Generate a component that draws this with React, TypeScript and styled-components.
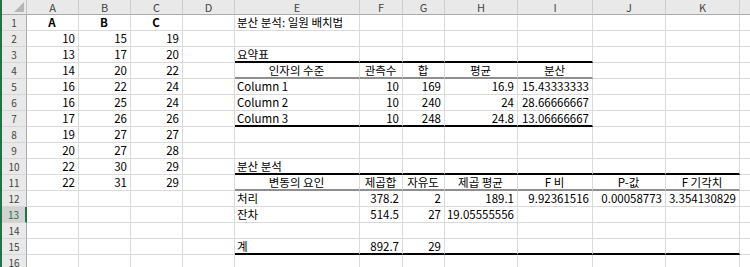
import React from "react";
import styled, { createGlobalStyle, css } from "styled-components";

const GlobalStyle = createGlobalStyle`
  html, body { margin: 0; padding: 0; background: #ffffff; }
  body {
    width: 750px;
    height: 267px;
    overflow: hidden;
    font-family: "Noto Sans CJK KR", "Noto Sans", sans-serif;
  }
`;

type Align = "l" | "r" | "c";
type Edge = "thick" | "thin" | undefined;

interface CellSpec {
  v?: string;
  a?: Align;
  b?: boolean;
  e?: Edge;
}

const COLS = ["A", "B", "C", "D", "E", "F", "G", "H", "I", "J", "K", ""];

const Sheet = styled.div`
  display: grid;
  grid-template-columns: 25px 52px 52px 52px 52px 125px 43px 42px 73px 75px 73px 74px 80px;
  grid-template-rows: 15px repeat(16, 16px);
  width: 750px;
  height: 267px;
  overflow: hidden;
  box-sizing: border-box;
  border-left: 2px solid #217346;
  background: #ffffff;
`;

const Corner = styled.div`
  display: flex;
  align-items: flex-end;
  justify-content: flex-end;
  padding: 0 2px 2px 0;
  box-sizing: border-box;
  background: #e9e9e9;
  border-right: 1px solid #c4c4c4;
  border-bottom: 1px solid #ababab;
`;

const Triangle = styled.div`
  width: 0;
  height: 0;
  border-left: 10px solid transparent;
  border-bottom: 10px solid #b6b6b6;
`;

const ColHeader = styled.div`
  display: flex;
  align-items: center;
  justify-content: center;
  box-sizing: border-box;
  background: #e9e9e9;
  border-right: 1px solid #cdcdcd;
  border-bottom: 1px solid #ababab;
  font-size: 11px;
  color: #444444;
  line-height: 14px;
`;

const RowHeader = styled.div<{ $active?: boolean }>`
  display: flex;
  align-items: center;
  justify-content: center;
  box-sizing: border-box;
  background: #e9e9e9;
  border-right: 1px solid #ababab;
  border-bottom: 1px solid #d6d6d6;
  font-size: 10px;
  color: #444444;
  line-height: 15px;
  ${(p) =>
    p.$active &&
    css`
      background: #d2d2d2;
      color: #217346;
      border-right: 2px solid #217346;
    `}
`;

const Cell = styled.div<{ $align: Align; $bold?: boolean; $edge?: Edge }>`
  display: flex;
  align-items: center;
  justify-content: ${(p) =>
    p.$align === "r" ? "flex-end" : p.$align === "c" ? "center" : "flex-start"};
  box-sizing: border-box;
  padding: 0 3px 0 2px;
  border-right: 1px solid #dadada;
  border-bottom: ${(p) =>
    p.$edge === "thick"
      ? "2px solid #000000"
      : p.$edge === "thin"
      ? "2px solid #8e8e8e"
      : "1px solid #dadada"};
  font-size: 11.5px;
  line-height: 15px;
  font-weight: ${(p) => (p.$bold ? 700 : 400)};
  color: #000000;
  white-space: nowrap;
`;

const L = (v: string, e?: Edge): CellSpec => ({ v, a: "l", e });
const R = (v: string, e?: Edge): CellSpec => ({ v, a: "r", e });
const C = (v: string, e?: Edge): CellSpec => ({ v, a: "c", e });
const E = (e?: Edge): CellSpec => ({ e });

const abc: string[][] = [
  ["10", "15", "19"],
  ["13", "17", "20"],
  ["14", "20", "22"],
  ["16", "22", "24"],
  ["16", "25", "24"],
  ["17", "26", "26"],
  ["19", "27", "27"],
  ["20", "27", "28"],
  ["22", "30", "29"],
  ["22", "31", "29"],
];

function buildRows(): CellSpec[][] {
  const rows: CellSpec[][] = [];
  for (let i = 0; i < 16; i++) {
    rows.push(COLS.map(() => ({})));
  }
  rows[0][0] = { v: "A", a: "c", b: true };
  rows[0][1] = { v: "B", a: "c", b: true };
  rows[0][2] = { v: "C", a: "c", b: true };
  rows[0][4] = L("분산 분석: 일원 배치법");
  abc.forEach((r, i) => {
    rows[i + 1][0] = R(r[0]);
    rows[i + 1][1] = R(r[1]);
    rows[i + 1][2] = R(r[2]);
  });
  rows[2][4] = L("요약표", "thick");
  for (let c = 5; c <= 8; c++) rows[2][c] = E("thick");
  const h1 = ["인자의 수준", "관측수", "합", "평균", "분산"];
  h1.forEach((t, i) => (rows[3][4 + i] = C(t, "thin")));
  const d1 = [
    ["Column 1", "10", "169", "16.9", "15.43333333"],
    ["Column 2", "10", "240", "24", "28.66666667"],
    ["Column 3", "10", "248", "24.8", "13.06666667"],
  ];
  d1.forEach((r, i) => {
    const edge: Edge = i === 2 ? "thick" : undefined;
    rows[4 + i][4] = L(r[0], edge);
    for (let c = 1; c < 5; c++) rows[4 + i][4 + c] = R(r[c], edge);
  });
  rows[9][4] = L("분산 분석", "thick");
  for (let c = 5; c <= 10; c++) rows[9][c] = E("thick");
  const h2 = ["변동의 요인", "제곱합", "자유도", "제곱 평균", "F 비", "P-값", "F 기각치"];
  h2.forEach((t, i) => (rows[10][4 + i] = C(t, "thin")));
  const r12 = ["378.2", "2", "189.1", "9.92361516", "0.00058773", "3.354130829"];
  rows[11][4] = L("처리");
  r12.forEach((t, i) => (rows[11][5 + i] = R(t)));
  rows[12][4] = L("잔차");
  rows[12][5] = R("514.5");
  rows[12][6] = R("27");
  rows[12][7] = R("19.05555556");
  rows[14][4] = L("계", "thick");
  rows[14][5] = R("892.7", "thick");
  rows[14][6] = R("29", "thick");
  for (let c = 7; c <= 10; c++) rows[14][c] = E("thick");
  return rows;
}

const ROWS = buildRows();

export default function App() {
  return (
    <>
      <GlobalStyle />
      <Sheet>
        <Corner>
          <Triangle />
        </Corner>
        {COLS.map((c, i) => (
          <ColHeader key={`h${i}`}>{c}</ColHeader>
        ))}
        {ROWS.map((row, ri) => (
          <React.Fragment key={`r${ri}`}>
            <RowHeader $active={ri + 1 === 13}>{ri + 1}</RowHeader>
            {row.map((cell, ci) => (
              <Cell key={`c${ri}-${ci}`} $align={cell.a ?? "l"} $bold={cell.b} $edge={cell.e}>
                {cell.v ?? ""}
              </Cell>
            ))}
          </React.Fragment>
        ))}
      </Sheet>
    </>
  );
}
